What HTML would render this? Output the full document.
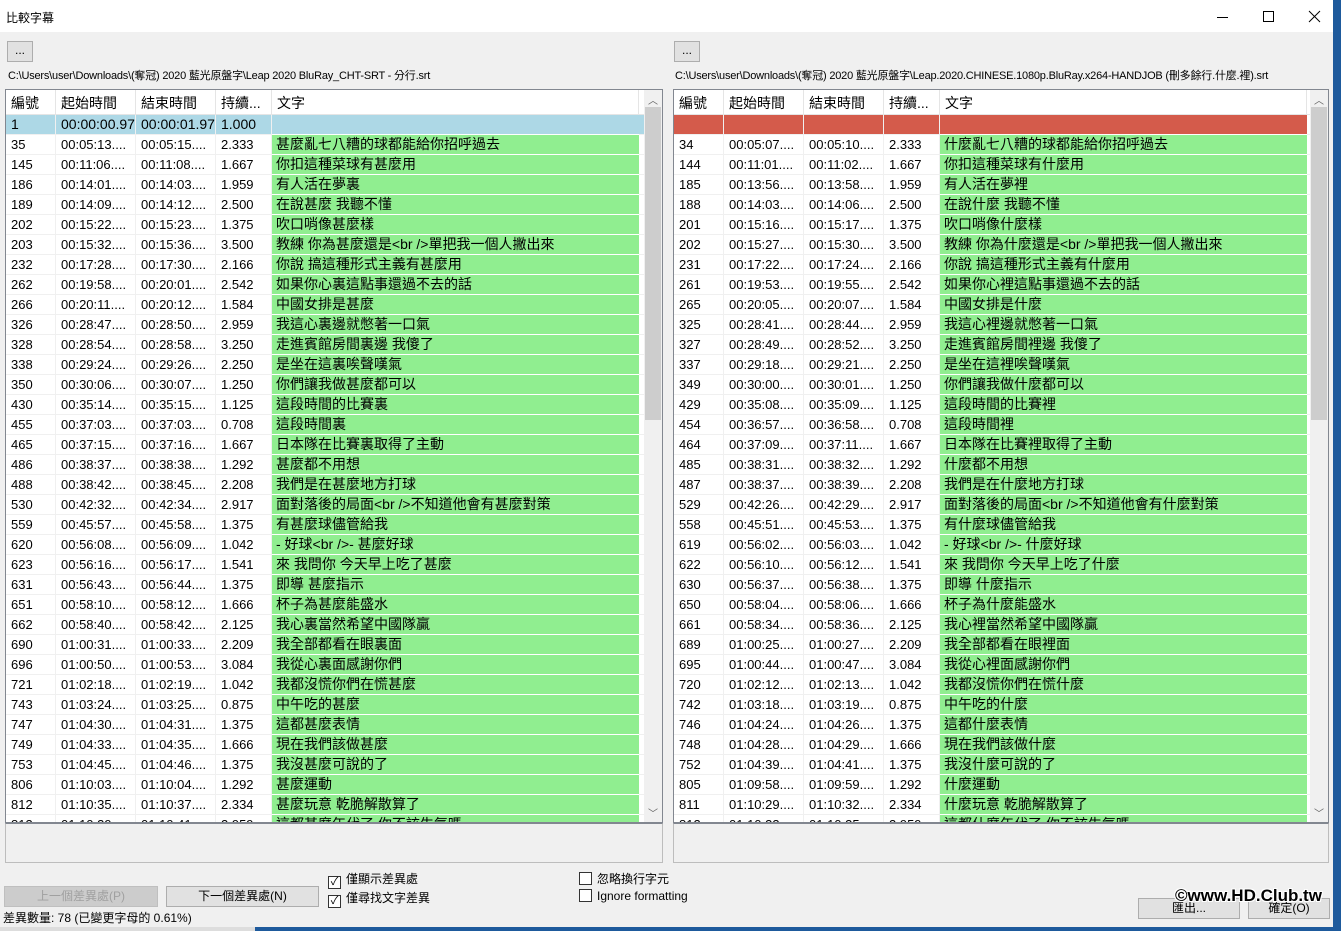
<!DOCTYPE html>
<html><head><meta charset="utf-8"><style>
*{margin:0;padding:0;box-sizing:border-box}
body{width:1341px;height:931px;overflow:hidden;background:#1e5a9c;font-family:"Liberation Sans","Noto Sans CJK TC",sans-serif;position:relative}
.win{position:absolute;left:0;top:0;width:1333px;height:927px;background:#f0f0f0}
.title{position:absolute;left:0;top:0;width:1333px;height:32px;background:#fff;font-size:12px}
.title span{position:absolute;left:6px;top:9px}
.ab{position:absolute;font-size:12px;top:41px;width:26px;height:21px;border:1px solid #adadad;background:#e1e1e1;text-align:center;line-height:16px}
.path{position:absolute;top:67px;font-size:11px;letter-spacing:-0.2px;white-space:nowrap}
.list{position:absolute;top:89px;height:734px;background:#fff;border:1px solid #828790;overflow:hidden}
.hd{display:flex;height:25px;border-bottom:1px solid #e5e5e5;font-size:14px}
.hd i{font-style:normal;border-right:1px solid #e5e5e5;padding:3px 0 0 5px;white-space:nowrap;overflow:hidden}
.r{display:flex;height:20px;border-bottom:1px solid #f0f0f0;font-size:13px;line-height:19px}
.r i{font-style:normal;padding-left:5px;border-right:1px solid #f0f0f0;white-space:nowrap;overflow:hidden}
.r b{font-weight:normal;background:#90ee90;padding-left:4px;font-size:14px;white-space:nowrap;overflow:hidden;border-bottom:1px solid #fff;margin-bottom:-1px}
.c1{width:50px}.c2{width:80px}.c3{width:80px}.c4{width:56px}.c5{width:367px}
.sel{background:#add8e6}.sel i,.sel b{background:#add8e6}
.red i,.red b{background:#d45b4b}
.sb{position:absolute;top:0;right:0;width:18px;height:100%;background:#f0f0f0}
.sb .th{position:absolute;left:1px;width:16px;top:17px;height:313px;background:#cdcdcd}
.sb .up,.sb .dn{position:absolute;left:0;width:18px;text-align:center;font-size:10px;color:#606060}
.box{position:absolute;top:823px;height:40px;border:1px solid #bdbdbd;border-top:1px solid #828790;background:#f0f0f0}
.btn{position:absolute;height:21px;border:1px solid #adadad;background:#e1e1e1;font-size:12px;text-align:center;line-height:19px}
.cb{position:absolute;font-size:12px;white-space:nowrap}
.cb s{display:inline-block;width:13px;height:13px;border:1px solid #333;background:#fff;vertical-align:-2px;margin-right:5px;text-decoration:none;font-size:11px;line-height:11px;text-align:center}
</style></head><body>
<div class="win">
<div class="title"><span>比較字幕</span>
<svg style="position:absolute;left:1210px;top:10px" width="120" height="14"><line x1="7" y1="7.5" x2="18" y2="7.5" stroke="#000"/><rect x="53.5" y="1.5" width="10" height="10" fill="none" stroke="#000"/><path d="M99 1L110 12M110 1L99 12" stroke="#000"/></svg></div>
<div class="ab" style="left:7px">...</div>
<div class="ab" style="left:674px">...</div>
<div class="path" style="left:8px">C:\Users\user\Downloads\(奪冠) 2020 藍光原盤字\Leap 2020 BluRay_CHT-SRT - 分行.srt</div>
<div class="path" style="left:675px">C:\Users\user\Downloads\(奪冠) 2020 藍光原盤字\Leap.2020.CHINESE.1080p.BluRay.x264-HANDJOB (刪多餘行.什麼.裡).srt</div>

<div class="list" style="left:5px;width:658px">
<div class="hd"><i class="c1">編號</i><i class="c2">起始時間</i><i class="c3">結束時間</i><i class="c4">持續...</i><i class="c5">文字</i></div>
<div class="r sel" style="font-size:14px"><i class="c1">1</i><i class="c2">00:00:00.97</i><i class="c3">00:00:01.97</i><i class="c4">1.000</i><b class="c5"></b></div>
<div class="r"><i class="c1">35</i><i class="c2">00:05:13....</i><i class="c3">00:05:15....</i><i class="c4">2.333</i><b class="c5">甚麼亂七八糟的球都能給你招呼過去</b></div>
<div class="r"><i class="c1">145</i><i class="c2">00:11:06....</i><i class="c3">00:11:08....</i><i class="c4">1.667</i><b class="c5">你扣這種菜球有甚麼用</b></div>
<div class="r"><i class="c1">186</i><i class="c2">00:14:01....</i><i class="c3">00:14:03....</i><i class="c4">1.959</i><b class="c5">有人活在夢裏</b></div>
<div class="r"><i class="c1">189</i><i class="c2">00:14:09....</i><i class="c3">00:14:12....</i><i class="c4">2.500</i><b class="c5">在說甚麼 我聽不懂</b></div>
<div class="r"><i class="c1">202</i><i class="c2">00:15:22....</i><i class="c3">00:15:23....</i><i class="c4">1.375</i><b class="c5">吹口哨像甚麼樣</b></div>
<div class="r"><i class="c1">203</i><i class="c2">00:15:32....</i><i class="c3">00:15:36....</i><i class="c4">3.500</i><b class="c5">教練 你為甚麼還是&lt;br /&gt;單把我一個人撇出來</b></div>
<div class="r"><i class="c1">232</i><i class="c2">00:17:28....</i><i class="c3">00:17:30....</i><i class="c4">2.166</i><b class="c5">你說 搞這種形式主義有甚麼用</b></div>
<div class="r"><i class="c1">262</i><i class="c2">00:19:58....</i><i class="c3">00:20:01....</i><i class="c4">2.542</i><b class="c5">如果你心裏這點事還過不去的話</b></div>
<div class="r"><i class="c1">266</i><i class="c2">00:20:11....</i><i class="c3">00:20:12....</i><i class="c4">1.584</i><b class="c5">中國女排是甚麼</b></div>
<div class="r"><i class="c1">326</i><i class="c2">00:28:47....</i><i class="c3">00:28:50....</i><i class="c4">2.959</i><b class="c5">我這心裏邊就憋著一口氣</b></div>
<div class="r"><i class="c1">328</i><i class="c2">00:28:54....</i><i class="c3">00:28:58....</i><i class="c4">3.250</i><b class="c5">走進賓館房間裏邊 我傻了</b></div>
<div class="r"><i class="c1">338</i><i class="c2">00:29:24....</i><i class="c3">00:29:26....</i><i class="c4">2.250</i><b class="c5">是坐在這裏唉聲嘆氣</b></div>
<div class="r"><i class="c1">350</i><i class="c2">00:30:06....</i><i class="c3">00:30:07....</i><i class="c4">1.250</i><b class="c5">你們讓我做甚麼都可以</b></div>
<div class="r"><i class="c1">430</i><i class="c2">00:35:14....</i><i class="c3">00:35:15....</i><i class="c4">1.125</i><b class="c5">這段時間的比賽裏</b></div>
<div class="r"><i class="c1">455</i><i class="c2">00:37:03....</i><i class="c3">00:37:03....</i><i class="c4">0.708</i><b class="c5">這段時間裏</b></div>
<div class="r"><i class="c1">465</i><i class="c2">00:37:15....</i><i class="c3">00:37:16....</i><i class="c4">1.667</i><b class="c5">日本隊在比賽裏取得了主動</b></div>
<div class="r"><i class="c1">486</i><i class="c2">00:38:37....</i><i class="c3">00:38:38....</i><i class="c4">1.292</i><b class="c5">甚麼都不用想</b></div>
<div class="r"><i class="c1">488</i><i class="c2">00:38:42....</i><i class="c3">00:38:45....</i><i class="c4">2.208</i><b class="c5">我們是在甚麼地方打球</b></div>
<div class="r"><i class="c1">530</i><i class="c2">00:42:32....</i><i class="c3">00:42:34....</i><i class="c4">2.917</i><b class="c5">面對落後的局面&lt;br /&gt;不知道他會有甚麼對策</b></div>
<div class="r"><i class="c1">559</i><i class="c2">00:45:57....</i><i class="c3">00:45:58....</i><i class="c4">1.375</i><b class="c5">有甚麼球儘管給我</b></div>
<div class="r"><i class="c1">620</i><i class="c2">00:56:08....</i><i class="c3">00:56:09....</i><i class="c4">1.042</i><b class="c5">- 好球&lt;br /&gt;- 甚麼好球</b></div>
<div class="r"><i class="c1">623</i><i class="c2">00:56:16....</i><i class="c3">00:56:17....</i><i class="c4">1.541</i><b class="c5">來 我問你 今天早上吃了甚麼</b></div>
<div class="r"><i class="c1">631</i><i class="c2">00:56:43....</i><i class="c3">00:56:44....</i><i class="c4">1.375</i><b class="c5">即導 甚麼指示</b></div>
<div class="r"><i class="c1">651</i><i class="c2">00:58:10....</i><i class="c3">00:58:12....</i><i class="c4">1.666</i><b class="c5">杯子為甚麼能盛水</b></div>
<div class="r"><i class="c1">662</i><i class="c2">00:58:40....</i><i class="c3">00:58:42....</i><i class="c4">2.125</i><b class="c5">我心裏當然希望中國隊贏</b></div>
<div class="r"><i class="c1">690</i><i class="c2">01:00:31....</i><i class="c3">01:00:33....</i><i class="c4">2.209</i><b class="c5">我全部都看在眼裏面</b></div>
<div class="r"><i class="c1">696</i><i class="c2">01:00:50....</i><i class="c3">01:00:53....</i><i class="c4">3.084</i><b class="c5">我從心裏面感謝你們</b></div>
<div class="r"><i class="c1">721</i><i class="c2">01:02:18....</i><i class="c3">01:02:19....</i><i class="c4">1.042</i><b class="c5">我都沒慌你們在慌甚麼</b></div>
<div class="r"><i class="c1">743</i><i class="c2">01:03:24....</i><i class="c3">01:03:25....</i><i class="c4">0.875</i><b class="c5">中午吃的甚麼</b></div>
<div class="r"><i class="c1">747</i><i class="c2">01:04:30....</i><i class="c3">01:04:31....</i><i class="c4">1.375</i><b class="c5">這都甚麼表情</b></div>
<div class="r"><i class="c1">749</i><i class="c2">01:04:33....</i><i class="c3">01:04:35....</i><i class="c4">1.666</i><b class="c5">現在我們該做甚麼</b></div>
<div class="r"><i class="c1">753</i><i class="c2">01:04:45....</i><i class="c3">01:04:46....</i><i class="c4">1.375</i><b class="c5">我沒甚麼可說的了</b></div>
<div class="r"><i class="c1">806</i><i class="c2">01:10:03....</i><i class="c3">01:10:04....</i><i class="c4">1.292</i><b class="c5">甚麼運動</b></div>
<div class="r"><i class="c1">812</i><i class="c2">01:10:35....</i><i class="c3">01:10:37....</i><i class="c4">2.334</i><b class="c5">甚麼玩意 乾脆解散算了</b></div>
<div class="r"><i class="c1">813</i><i class="c2">01:10:39....</i><i class="c3">01:10:41....</i><i class="c4">2.959</i><b class="c5">這都甚麼年代了 你不該生氣嗎</b></div>
<div class="sb"><div class="up" style="top:2px">︿</div><div class="th"></div><div class="dn" style="bottom:2px">﹀</div></div>
</div>

<div class="list" style="left:673px;width:656px">
<div class="hd"><i class="c1">編號</i><i class="c2">起始時間</i><i class="c3">結束時間</i><i class="c4">持續...</i><i class="c5">文字</i></div>
<div class="r red"><i class="c1"></i><i class="c2"></i><i class="c3"></i><i class="c4"></i><b class="c5"></b></div>
<div class="r"><i class="c1">34</i><i class="c2">00:05:07....</i><i class="c3">00:05:10....</i><i class="c4">2.333</i><b class="c5">什麼亂七八糟的球都能給你招呼過去</b></div>
<div class="r"><i class="c1">144</i><i class="c2">00:11:01....</i><i class="c3">00:11:02....</i><i class="c4">1.667</i><b class="c5">你扣這種菜球有什麼用</b></div>
<div class="r"><i class="c1">185</i><i class="c2">00:13:56....</i><i class="c3">00:13:58....</i><i class="c4">1.959</i><b class="c5">有人活在夢裡</b></div>
<div class="r"><i class="c1">188</i><i class="c2">00:14:03....</i><i class="c3">00:14:06....</i><i class="c4">2.500</i><b class="c5">在說什麼 我聽不懂</b></div>
<div class="r"><i class="c1">201</i><i class="c2">00:15:16....</i><i class="c3">00:15:17....</i><i class="c4">1.375</i><b class="c5">吹口哨像什麼樣</b></div>
<div class="r"><i class="c1">202</i><i class="c2">00:15:27....</i><i class="c3">00:15:30....</i><i class="c4">3.500</i><b class="c5">教練 你為什麼還是&lt;br /&gt;單把我一個人撇出來</b></div>
<div class="r"><i class="c1">231</i><i class="c2">00:17:22....</i><i class="c3">00:17:24....</i><i class="c4">2.166</i><b class="c5">你說 搞這種形式主義有什麼用</b></div>
<div class="r"><i class="c1">261</i><i class="c2">00:19:53....</i><i class="c3">00:19:55....</i><i class="c4">2.542</i><b class="c5">如果你心裡這點事還過不去的話</b></div>
<div class="r"><i class="c1">265</i><i class="c2">00:20:05....</i><i class="c3">00:20:07....</i><i class="c4">1.584</i><b class="c5">中國女排是什麼</b></div>
<div class="r"><i class="c1">325</i><i class="c2">00:28:41....</i><i class="c3">00:28:44....</i><i class="c4">2.959</i><b class="c5">我這心裡邊就憋著一口氣</b></div>
<div class="r"><i class="c1">327</i><i class="c2">00:28:49....</i><i class="c3">00:28:52....</i><i class="c4">3.250</i><b class="c5">走進賓館房間裡邊 我傻了</b></div>
<div class="r"><i class="c1">337</i><i class="c2">00:29:18....</i><i class="c3">00:29:21....</i><i class="c4">2.250</i><b class="c5">是坐在這裡唉聲嘆氣</b></div>
<div class="r"><i class="c1">349</i><i class="c2">00:30:00....</i><i class="c3">00:30:01....</i><i class="c4">1.250</i><b class="c5">你們讓我做什麼都可以</b></div>
<div class="r"><i class="c1">429</i><i class="c2">00:35:08....</i><i class="c3">00:35:09....</i><i class="c4">1.125</i><b class="c5">這段時間的比賽裡</b></div>
<div class="r"><i class="c1">454</i><i class="c2">00:36:57....</i><i class="c3">00:36:58....</i><i class="c4">0.708</i><b class="c5">這段時間裡</b></div>
<div class="r"><i class="c1">464</i><i class="c2">00:37:09....</i><i class="c3">00:37:11....</i><i class="c4">1.667</i><b class="c5">日本隊在比賽裡取得了主動</b></div>
<div class="r"><i class="c1">485</i><i class="c2">00:38:31....</i><i class="c3">00:38:32....</i><i class="c4">1.292</i><b class="c5">什麼都不用想</b></div>
<div class="r"><i class="c1">487</i><i class="c2">00:38:37....</i><i class="c3">00:38:39....</i><i class="c4">2.208</i><b class="c5">我們是在什麼地方打球</b></div>
<div class="r"><i class="c1">529</i><i class="c2">00:42:26....</i><i class="c3">00:42:29....</i><i class="c4">2.917</i><b class="c5">面對落後的局面&lt;br /&gt;不知道他會有什麼對策</b></div>
<div class="r"><i class="c1">558</i><i class="c2">00:45:51....</i><i class="c3">00:45:53....</i><i class="c4">1.375</i><b class="c5">有什麼球儘管給我</b></div>
<div class="r"><i class="c1">619</i><i class="c2">00:56:02....</i><i class="c3">00:56:03....</i><i class="c4">1.042</i><b class="c5">- 好球&lt;br /&gt;- 什麼好球</b></div>
<div class="r"><i class="c1">622</i><i class="c2">00:56:10....</i><i class="c3">00:56:12....</i><i class="c4">1.541</i><b class="c5">來 我問你 今天早上吃了什麼</b></div>
<div class="r"><i class="c1">630</i><i class="c2">00:56:37....</i><i class="c3">00:56:38....</i><i class="c4">1.375</i><b class="c5">即導 什麼指示</b></div>
<div class="r"><i class="c1">650</i><i class="c2">00:58:04....</i><i class="c3">00:58:06....</i><i class="c4">1.666</i><b class="c5">杯子為什麼能盛水</b></div>
<div class="r"><i class="c1">661</i><i class="c2">00:58:34....</i><i class="c3">00:58:36....</i><i class="c4">2.125</i><b class="c5">我心裡當然希望中國隊贏</b></div>
<div class="r"><i class="c1">689</i><i class="c2">01:00:25....</i><i class="c3">01:00:27....</i><i class="c4">2.209</i><b class="c5">我全部都看在眼裡面</b></div>
<div class="r"><i class="c1">695</i><i class="c2">01:00:44....</i><i class="c3">01:00:47....</i><i class="c4">3.084</i><b class="c5">我從心裡面感謝你們</b></div>
<div class="r"><i class="c1">720</i><i class="c2">01:02:12....</i><i class="c3">01:02:13....</i><i class="c4">1.042</i><b class="c5">我都沒慌你們在慌什麼</b></div>
<div class="r"><i class="c1">742</i><i class="c2">01:03:18....</i><i class="c3">01:03:19....</i><i class="c4">0.875</i><b class="c5">中午吃的什麼</b></div>
<div class="r"><i class="c1">746</i><i class="c2">01:04:24....</i><i class="c3">01:04:26....</i><i class="c4">1.375</i><b class="c5">這都什麼表情</b></div>
<div class="r"><i class="c1">748</i><i class="c2">01:04:28....</i><i class="c3">01:04:29....</i><i class="c4">1.666</i><b class="c5">現在我們該做什麼</b></div>
<div class="r"><i class="c1">752</i><i class="c2">01:04:39....</i><i class="c3">01:04:41....</i><i class="c4">1.375</i><b class="c5">我沒什麼可說的了</b></div>
<div class="r"><i class="c1">805</i><i class="c2">01:09:58....</i><i class="c3">01:09:59....</i><i class="c4">1.292</i><b class="c5">什麼運動</b></div>
<div class="r"><i class="c1">811</i><i class="c2">01:10:29....</i><i class="c3">01:10:32....</i><i class="c4">2.334</i><b class="c5">什麼玩意 乾脆解散算了</b></div>
<div class="r"><i class="c1">812</i><i class="c2">01:10:33....</i><i class="c3">01:10:35....</i><i class="c4">2.959</i><b class="c5">這都什麼年代了 你不該生氣嗎</b></div>
<div class="sb"><div class="up" style="top:2px">︿</div><div class="th"></div><div class="dn" style="bottom:2px">﹀</div></div>
</div>

<div class="box" style="left:5px;width:658px"></div>
<div class="box" style="left:673px;width:656px"></div>

<div class="btn" style="left:4px;top:886px;width:154px;color:#a0a0a0;background:#cccccc;border-color:#bfbfbf">上一個差異處(P)</div>
<div class="btn" style="left:166px;top:886px;width:153px">下一個差異處(N)</div>
<div class="cb" style="left:328px;top:870px"><s>✓</s>僅顯示差異處</div>
<div class="cb" style="left:328px;top:889px"><s>✓</s>僅尋找文字差異</div>
<div class="cb" style="left:579px;top:870px"><s></s>忽略換行字元</div>
<div class="cb" style="left:579px;top:889px"><s></s>Ignore formatting</div>
<div style="position:absolute;left:3px;top:909px;font-size:12px">差異數量: 78 (已變更字母的 0.61%)</div>
<div class="btn" style="left:1138px;top:898px;width:102px">匯出...</div>
<div class="btn" style="left:1248px;top:898px;width:82px">確定(O)</div>
<div style="position:absolute;left:1175px;top:886px;font-size:17px;font-weight:bold;color:#000;text-shadow:1px 1px 0 #fff,-1px -1px 0 #fff,1px -1px 0 #fff,-1px 1px 0 #fff">©www.HD.Club.tw</div>
</div>
<div style="position:absolute;left:0;top:927px;width:255px;height:4px;background:#ddd"></div>
</body></html>
